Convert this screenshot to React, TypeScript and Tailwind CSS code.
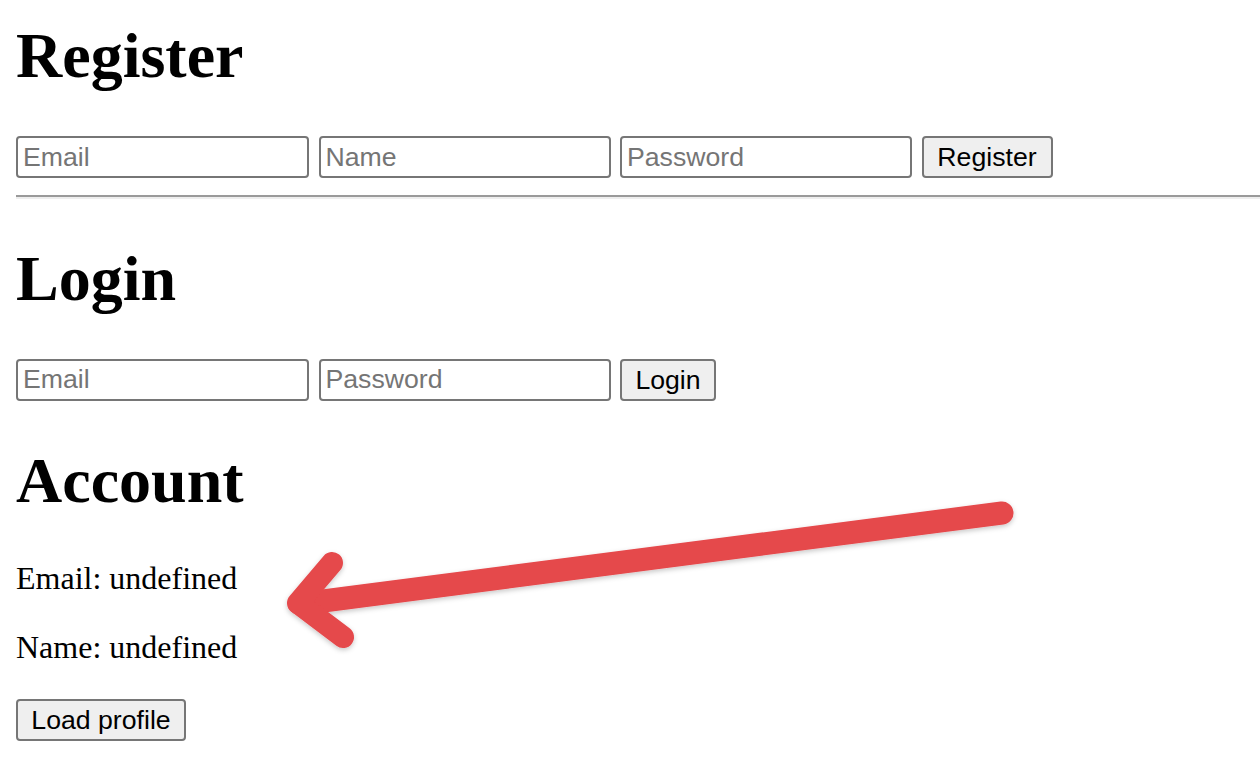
import React from "react";

function Field({ placeholder, w }: { placeholder: string; w: string }) {
  return (
    <input
      type="text"
      placeholder={placeholder}
      className={`${w} h-[42px] shrink-0 rounded-[4px] border-2 border-[#767676] bg-white pl-[5px] pr-[4px] font-['Liberation_Sans',Arial,sans-serif] text-[26.67px] leading-[30px] text-black outline-none placeholder:text-[#757575]`}
    />
  );
}

function Btn({ label, w }: { label: string; w: string }) {
  return (
    <button
      type="button"
      className={`${w} flex h-[42px] shrink-0 items-center justify-center rounded-[4px] border-2 border-[#767676] bg-[#efefef] font-['Liberation_Sans',Arial,sans-serif] text-[26.67px] leading-[30px] text-black`}
    >
      {label}
    </button>
  );
}

export default function App() {
  return (
    <div className="relative h-[780px] w-[1260px] overflow-hidden bg-white font-['Liberation_Serif','Times_New_Roman',serif] text-black">
      <div className="flex flex-col pl-4">
        <h1 className="mt-[19px] text-[64px] font-bold leading-[73.5px]">Register</h1>
        <div className="mt-[43.5px] flex gap-[9.5px]">
          <Field placeholder="Email" w="w-[293px]" />
          <Field placeholder="Name" w="w-[292px]" />
          <Field placeholder="Password" w="w-[292px]" />
          <Btn label="Register" w="w-[131px]" />
        </div>
        <div className="mt-[17px] flex flex-col">
          <div className="h-[2px] bg-[#9a9a9a]" />
          <div className="h-[2px] bg-[#eeeeee]" />
        </div>
        <h1 className="mt-[42.65px] text-[64px] font-bold leading-[73.5px]">Login</h1>
        <div className="mt-[43.85px] flex gap-[9.5px]">
          <Field placeholder="Email" w="w-[293px]" />
          <Field placeholder="Password" w="w-[292px]" />
          <Btn label="Login" w="w-[96px]" />
        </div>
        <h1 className="mt-[42.65px] text-[64px] font-bold leading-[73.5px]">Account</h1>
        <p className="mt-[42.65px] text-[32px] leading-[36.8px]">Email: undefined</p>
        <p className="mt-[32.2px] text-[32px] leading-[36.8px]">Name: undefined</p>
        <div className="mt-[33.4px] flex">
          <Btn label="Load profile" w="w-[170px]" />
        </div>
      </div>
      <svg
        className="pointer-events-none absolute left-0 top-0"
        width="1260"
        height="780"
        viewBox="0 0 1260 780"
      >
        <defs>
          <filter id="sh" x="-10%" y="-50%" width="120%" height="200%">
            <feDropShadow dx="0" dy="2" stdDeviation="2.5" floodColor="#000" floodOpacity="0.22" />
          </filter>
        </defs>
        <g filter="url(#sh)" stroke="#e5484b" fill="none" strokeLinecap="round" strokeLinejoin="round">
          <path d="M1002 513 L300 604" strokeWidth="23" />
          <path d="M332 563 L298 603 L343 637" strokeWidth="22" />
        </g>
      </svg>
    </div>
  );
}
